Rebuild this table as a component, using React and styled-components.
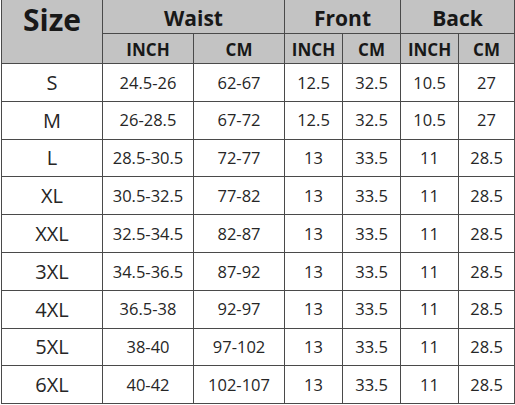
import React from 'react';
import styled, { createGlobalStyle } from 'styled-components';

const GlobalStyle = createGlobalStyle`
  html, body {
    margin: 0;
    padding: 0;
    background: #ffffff;
  }
  body {
    font-family: 'Open Sans', 'Noto Sans', sans-serif;
  }
`;

const rows = [
  ['S', '24.5-26', '62-67', '12.5', '32.5', '10.5', '27'],
  ['M', '26-28.5', '67-72', '12.5', '32.5', '10.5', '27'],
  ['L', '28.5-30.5', '72-77', '13', '33.5', '11', '28.5'],
  ['XL', '30.5-32.5', '77-82', '13', '33.5', '11', '28.5'],
  ['XXL', '32.5-34.5', '82-87', '13', '33.5', '11', '28.5'],
  ['3XL', '34.5-36.5', '87-92', '13', '33.5', '11', '28.5'],
  ['4XL', '36.5-38', '92-97', '13', '33.5', '11', '28.5'],
  ['5XL', '38-40', '97-102', '13', '33.5', '11', '28.5'],
  ['6XL', '40-42', '102-107', '13', '33.5', '11', '28.5'],
];

const colWidths = [101, 91, 91, 58, 58, 58, 56];

const Page = styled.div`
  width: 515px;
  height: 405px;
  overflow: hidden;
`;

const Table = styled.table`
  border-collapse: collapse;
  table-layout: fixed;
  width: 514px;
  margin: -1px 0 0 1px;
`;

const HeadCell = styled.th`
  background: #c3c3c3;
  color: #181818;
  border: 1px solid #4a4a4a;
  font-weight: 700;
  font-size: ${p => p.$size}px;
  height: ${p => p.$h}px;
  padding: ${p => p.$pt}px 0 0;
  text-align: center;
  vertical-align: middle;
  line-height: 1;
`;

const SizeHead = styled(HeadCell)`
  vertical-align: top;
  line-height: 1.2;
`;

const Cell = styled.td`
  border: 1px solid #4a4a4a;
  color: #262626;
  font-size: ${p => (p.$label ? 20 : 16.5)}px;
  height: 35.8px;
  padding: 1px 0 0;
  text-align: center;
  vertical-align: middle;
  line-height: 1;
`;

export default function App() {
  return (
    <Page>
      <GlobalStyle />
      <Table>
        <colgroup>
          {colWidths.map((w, i) => (
            <col key={i} style={{ width: w }} />
          ))}
        </colgroup>
        <thead>
          <tr>
            <SizeHead rowSpan={2} $size={30} $h={30} $pt={2}>Size</SizeHead>
            <HeadCell colSpan={2} $size={21} $h={30} $pt={3}>Waist</HeadCell>
            <HeadCell colSpan={2} $size={21} $h={30} $pt={3}>Front</HeadCell>
            <HeadCell colSpan={2} $size={21} $h={30} $pt={3}>Back</HeadCell>
          </tr>
          <tr>
            {['INCH', 'CM', 'INCH', 'CM', 'INCH', 'CM'].map((t, i) => (
              <HeadCell key={i} $size={17} $h={28} $pt={1}>{t}</HeadCell>
            ))}
          </tr>
        </thead>
        <tbody>
          {rows.map(r => (
            <tr key={r[0]}>
              {r.map((v, i) => (
                <Cell key={i} $label={i === 0}>{v}</Cell>
              ))}
            </tr>
          ))}
        </tbody>
      </Table>
    </Page>
  );
}
